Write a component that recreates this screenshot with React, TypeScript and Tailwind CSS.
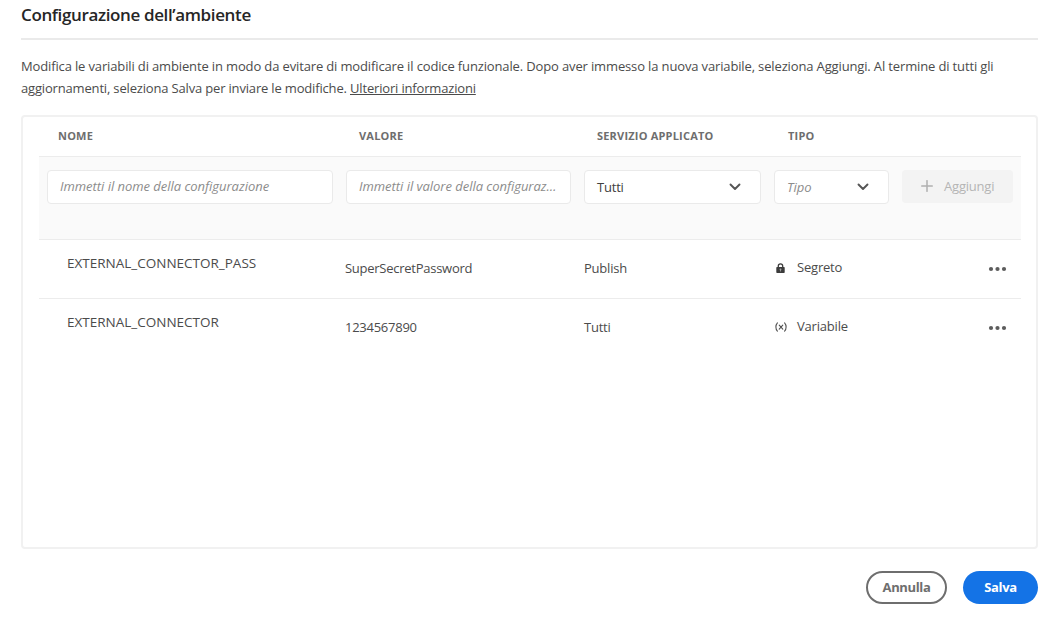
import type { ReactNode } from "react";

const columns = "grid grid-cols-[299px_238px_190px_128px_1fr]";

function Chevron() {
  return (
    <svg className="h-[8px] w-[12px] shrink-0" viewBox="0 0 12 8" fill="none" stroke="#555" strokeWidth="1.9" strokeLinecap="round" strokeLinejoin="round">
      <path d="M1.500 1.500 6 6l4.500-4.500" />
    </svg>
  );
}

function LockIcon() {
  return (
    <svg className="h-[10px] w-[9px]" viewBox="0 0 9 10">
      <path d="M2.300 4.500V3a2.200 2.200 0 0 1 4.400 0v1.500" fill="none" stroke="#3c3c3c" strokeWidth="1.300" />
      <rect x="0.300" y="4" width="8.400" height="6" rx="0.700" fill="#3c3c3c" />
      <circle cx="4.500" cy="6.500" r="0.900" fill="#a8a8a8" />
      <rect x="4.100" y="6.700" width="0.800" height="1.800" fill="#a8a8a8" />
    </svg>
  );
}

function VariableIcon() {
  return (
    <svg className="h-[10px] w-[12px]" viewBox="0 0 12 10" fill="none" stroke="#505050" strokeWidth="1.100" strokeLinecap="round">
      <path d="M2.400.8C.4 3 .4 7 2.400 9.200M9.600.8c2 2.200 2 6.200 0 8.400M4.200 3.200l3.600 3.900M7.800 3.200 4.200 7.100" />
    </svg>
  );
}

function MoreButton() {
  return (
    <button aria-label="Altre azioni" className="mt-[2px] ml-[94px]">
      <svg className="h-[6px] w-[19px]" viewBox="0 0 19 6" fill="#5c5c5c">
        <circle cx="3" cy="3" r="2.100" />
        <circle cx="9.500" cy="3" r="2.100" />
        <circle cx="16" cy="3" r="2.100" />
      </svg>
    </button>
  );
}

interface RowProps {
  name: string;
  value: string;
  service: string;
  icon: ReactNode;
  type: string;
}

function Row({ name, value, service, icon, type }: RowProps) {
  return (
    <div className={`${columns} h-[58px] items-center pb-[3px] text-[#4b4b4b]`}>
      <div className="-mt-[9px] pl-[28px] text-[13.5px]">{name}</div>
      <div className="pl-[7px] tracking-[-0.26px]">{value}</div>
      <div className="pl-[8px] tracking-[-0.22px]">{service}</div>
      <div className="-mt-[2px] flex items-center pl-[7px] tracking-[-0.2px]">
        <span className="mt-[2px] flex w-[15px] justify-center">{icon}</span>
        <span className="ml-[9px]">{type}</span>
      </div>
      <MoreButton />
    </div>
  );
}

const field = "flex h-[34px] shrink-0 items-center rounded-[4px] border border-[#eaeaea] bg-white";

export default function App() {
  return (
    <main className="h-[622px] w-[1056px] bg-white pr-[18px] pl-[21px] font-['Open_Sans','Noto_Sans',sans-serif] text-[13px] leading-[22px] text-[#4b4b4b]">
      <h1 className="h-[40px] border-b-2 border-[#eaeaea] pt-[4px] text-[17px] font-semibold tracking-[-0.37px] text-[#262626]">
        Configurazione dell’ambiente
      </h1>
      <p className="mt-[15px] whitespace-nowrap tracking-[-0.14px]">
        Modifica le variabili di ambiente in modo da evitare di modificare il codice funzionale. Dopo aver immesso la nuova variabile, seleziona Aggiungi. Al termine di tutti gli
        <br />
        <span className="tracking-[-0.17px]">
          aggiornamenti, seleziona Salva per inviare le modifiche.{" "}
          <a href="#info" className="underline underline-offset-1">Ulteriori informazioni</a>
        </span>
      </p>

      <section className="mt-[16px] h-[434px] rounded-[4px] border-2 border-[#f1f1f1] pr-[15px] pl-[16px]">
        <div className={`${columns} h-[39px] items-center pb-[2px] text-[11px] font-bold tracking-[0.2px] text-[#6e6e6e]`}>
          <div className="pl-[19px]">NOME</div>
          <div className="pl-[21px]">VALORE</div>
          <div className="pl-[21px]">SERVIZIO APPLICATO</div>
          <div className="pl-[22px]">TIPO</div>
        </div>
        <div className="flex h-[84px] items-start gap-[13px] border-y border-[#ececec] bg-[#fafafa] px-[8px] pt-[13px] tracking-[-0.03px]">
          <div className={`${field} w-[286px] px-[12px] text-[#8c8c8c] italic`}>
            <span className="-mt-[2px]">Immetti il nome della configurazione</span>
          </div>
          <div className={`${field} w-[225px] px-[12px] text-[#8c8c8c] italic`}>
            <span className="-mt-[2px] whitespace-nowrap">Immetti il valore della configuraz…</span>
          </div>
          <div className={`${field} w-[177px] justify-between pr-[19px] pl-[12px] tracking-[-0.2px] text-[#404040]`}>
            Tutti <Chevron />
          </div>
          <div className={`${field} w-[115px] justify-between pr-[19px] pl-[12px] text-[#8c8c8c] italic`}>
            Tipo <Chevron />
          </div>
          <button disabled className="flex h-[33px] w-[111px] shrink-0 items-center rounded-[4px] bg-[#f3f3f3] pl-[19px] tracking-[-0.2px] text-[#b5b5b5]">
            <svg className="-mt-px size-[12px]" viewBox="0 0 12 12" stroke="#b0b0b0" strokeWidth="1.500" strokeLinecap="round">
              <path d="M6 .7v10.600M.7 6h10.600" />
            </svg>
            <span className="-mt-px ml-[11px]">Aggiungi</span>
          </button>
        </div>
        <Row name="EXTERNAL_CONNECTOR_PASS" value="SuperSecretPassword" service="Publish" icon={<LockIcon />} type="Segreto" />
        <div className="border-t border-[#ececec]">
          <Row name="EXTERNAL_CONNECTOR" value="1234567890" service="Tutti" icon={<VariableIcon />} type="Variabile" />
        </div>
      </section>

      <footer className="mt-[22px] flex justify-end gap-[16px] font-bold">
        <button className="h-[33px] w-[81px] rounded-full border-2 border-[#6e6e6e] pb-[2px] tracking-[-0.35px] text-[#6e6e6e]">Annulla</button>
        <button className="h-[33px] w-[75px] rounded-full bg-[#1473e6] pb-px tracking-[-0.35px] text-white">Salva</button>
      </footer>
    </main>
  );
}
